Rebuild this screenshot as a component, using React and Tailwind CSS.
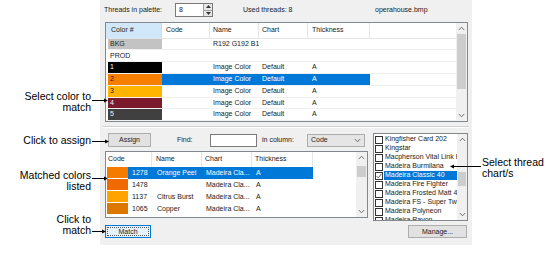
import React from "react";

const UI = "font-['Liberation_Sans',Arial,sans-serif] text-[7px] text-[#1a1a1a]";

function Chevron({ dir = "up" }) {
  return (
    <svg width="7" height="5" viewBox="0 0 7 5" className="block">
      {dir === "up" ? (
        <path d="M0.8 4 L3.5 1.2 L6.2 4" fill="none" stroke="#606060" strokeWidth="0.9" />
      ) : (
        <path d="M0.8 1 L3.5 3.8 L6.2 1" fill="none" stroke="#606060" strokeWidth="0.9" />
      )}
    </svg>
  );
}

function ScrollBar({ thumbTop, thumbH, w = "w-[11px]" }) {
  return (
    <div className={`${w} h-full bg-[#f0f0f0] flex flex-col items-center relative`}>
      <div className="h-[11px] flex items-center justify-center">
        <Chevron dir="up" />
      </div>
      <div className="flex-1 w-full relative">
        <div
          className="absolute left-[1px] right-[1px] bg-[#cdcdcd]"
          style={{ top: thumbTop, height: thumbH }}
        />
      </div>
      <div className="h-[11px] flex items-center justify-center">
        <Chevron dir="down" />
      </div>
    </div>
  );
}

const topRows = [
  { c: "BKG", bg: "#c3c3c3", fg: "#222", name: "R192 G192 B192", chart: "", thick: "", code: "" },
  { c: "PROD", bg: "#ffffff", fg: "#222", name: "", chart: "", thick: "" },
  { c: "1", bg: "#000000", fg: "#fff", name: "Image Color", chart: "Default", thick: "A" },
  { c: "2", bg: "#f77f00", fg: "#222", name: "Image Color", chart: "Default", thick: "A", sel: true },
  { c: "3", bg: "#ffb400", fg: "#222", name: "Image Color", chart: "Default", thick: "A" },
  { c: "4", bg: "#7a1a2c", fg: "#f2f2f2", name: "Image Color", chart: "Default", thick: "A" },
  { c: "5", bg: "#404040", fg: "#f2f2f2", name: "Image Color", chart: "Default", thick: "A" },
];

const matchRows = [
  { sw: "#f57a00", code: "1278", name: "Orange Peel", sel: true },
  { sw: "#f06a00", code: "1478", name: "" },
  { sw: "#ffa300", code: "1137", name: "Citrus Burst" },
  { sw: "#dc7800", code: "1065", name: "Copper" },
];

const charts = [
  "Kingfisher Card 202",
  "Kingstar",
  "Macpherson Vital Link Rayon",
  "Madeira Burmilana",
  "Madeira Classic 40",
  "Madeira Fire Fighter",
  "Madeira Frosted Matt 40",
  "Madeira FS - Super Twist",
  "Madeira Polyneon",
  "Madeira Rayon",
];

function TopTable() {
  return (
    <div className="ml-[5px] mt-[2px] w-[363px] h-[100px] border border-[#828790] bg-white flex overflow-hidden">
      <div className="flex-1 flex flex-col">
        <div className="h-[16px] flex border-b border-[#e5e5e5]">
          <div className="w-[56px] bg-[#d1e8fa] border-r border-[#c4dcef] pl-[5px] flex items-center">Color #</div>
          <div className="w-[48px] border-r border-[#e5e5e5] pl-[4px] flex items-center">Code</div>
          <div className="w-[49px] border-r border-[#e5e5e5] pl-[3px] flex items-center">Name</div>
          <div className="w-[49px] border-r border-[#e5e5e5] pl-[3px] flex items-center">Chart</div>
          <div className="w-[62px] border-r border-[#e5e5e5] pl-[4px] flex items-center">Thickness</div>
          <div className="flex-1" />
        </div>
        {topRows.map((r) => (
          <div key={r.c} className="h-[12px] flex border-b border-[#f0f0f0]">
            <div className="w-[56px] pl-[2px] flex">
              <div
                className="flex-1 pl-[2px] flex items-center"
                style={{ background: r.bg, color: r.fg }}
              >
                {r.c}
              </div>
            </div>
            <div className={`w-[208px] flex ${r.sel ? "bg-[#0078d7] text-white" : ""}`}>
              <div className="w-[48px]" />
              <div className="w-[49px] pl-[3px] flex items-center overflow-hidden whitespace-nowrap">{r.name}</div>
              <div className="w-[49px] pl-[3px] flex items-center whitespace-nowrap">{r.chart}</div>
              <div className="w-[62px] pl-[4px] flex items-center">{r.thick}</div>
            </div>
            <div className="flex-1" />
          </div>
        ))}
      </div>
      <ScrollBar thumbTop={0} thumbH={55} />
    </div>
  );
}

function MatchTable() {
  return (
    <div className="mt-[4px] w-[263px] h-[67px] border border-[#828790] bg-white flex overflow-hidden">
      <div className="flex-1 flex flex-col">
        <div className="h-[15px] flex">
          <div className="w-[46px] border-r border-[#e5e5e5] pl-[2px] flex items-center">Code</div>
          <div className="w-[50px] border-r border-[#e5e5e5] pl-[4px] flex items-center">Name</div>
          <div className="w-[50px] border-r border-[#e5e5e5] pl-[3px] flex items-center">Chart</div>
          <div className="w-[61px] border-r border-[#e5e5e5] pl-[3px] flex items-center">Thickness</div>
          <div className="flex-1" />
        </div>
        {matchRows.map((r) => (
          <div key={r.code} className="h-[12px] flex">
            <div className="w-[22px] pl-[1px] pb-[1px] flex">
              <div className="flex-1" style={{ background: r.sw }} />
            </div>
            <div className={`w-[185px] flex ${r.sel ? "bg-[#0078d7] text-white" : ""}`}>
              <div className="w-[24px] pl-[4px] flex items-center">{r.code}</div>
              <div className="w-[50px] pl-[5px] flex items-center whitespace-nowrap">{r.name}</div>
              <div className="w-[50px] pl-[4px] flex items-center whitespace-nowrap">Madeira Cla...</div>
              <div className="w-[61px] pl-[4px] flex items-center">A</div>
            </div>
            <div className="flex-1" />
          </div>
        ))}
      </div>
      <ScrollBar thumbTop={3} thumbH={11} w="w-[11px]" />
    </div>
  );
}

function ChartList() {
  return (
    <div className="ml-[5px] mt-[5px] w-[95px] h-[88px] border border-[#828790] bg-white flex overflow-hidden">
      <div className="flex-1 flex flex-col overflow-hidden pt-[1px]">
        {charts.map((c) => {
          const sel = c === "Madeira Classic 40";
          return (
            <div key={c} className="h-[9px] flex items-center shrink-0">
              <div className="w-[10px] h-[9px] flex items-center justify-center">
                <div className="w-[8px] h-[8px] border border-[#333] bg-white flex items-center justify-center">
                  {sel && (
                    <svg width="6" height="6" viewBox="0 0 6 6">
                      <path d="M0.6 3.2 L2.3 4.9 L5.4 0.9" fill="none" stroke="#333" strokeWidth="0.8" />
                    </svg>
                  )}
                </div>
              </div>
              <div
                className={`flex-1 h-[9px] pl-[1px] flex items-center whitespace-nowrap overflow-hidden ${
                  sel ? "bg-[#0078d7] text-white" : ""
                }`}
              >
                {c}
              </div>
            </div>
          );
        })}
      </div>
      <ScrollBar thumbTop={27} thumbH={14} w="w-[10px]" />
    </div>
  );
}

function Dialog() {
  return (
    <div className={`w-[372px] h-[245px] bg-[#f0f0f0] flex flex-col ${UI}`}>
      <div className="h-[20px] flex items-center pl-[4px]">
        <div className="w-[71px]">Threads in palette:</div>
        <div className="w-[38px] h-[14px] bg-white border border-[#7a7a7a] flex">
          <div className="flex-1 pl-[3px] flex items-center">8</div>
          <div className="w-[9px] flex flex-col border-l border-[#a0a0a0]">
            <div className="flex-1 bg-[#e8e8e8] border-b border-[#a0a0a0] flex items-center justify-center">
              <svg width="5" height="3" viewBox="0 0 5 3"><path d="M0 3 L2.5 0 L5 3 Z" fill="#333" /></svg>
            </div>
            <div className="flex-1 bg-[#e8e8e8] flex items-center justify-center">
              <svg width="5" height="3" viewBox="0 0 5 3"><path d="M0 0 L2.5 3 L5 0 Z" fill="#333" /></svg>
            </div>
          </div>
        </div>
        <div className="ml-[30px] w-[132px]">Used threads: 8</div>
        <div>operahouse.bmp</div>
      </div>
      <TopTable />
      <div className="mt-[4px] mx-[3px] h-[2px] border-t border-[#d0d0d0] border-b border-b-white" />
      <div className="flex">
        <div className="ml-[5px] w-[263px] flex flex-col">
          <div className="mt-[5px] h-[14px] flex items-center">
            <div className="ml-[3px] w-[43px] h-[14px] bg-[#e1e1e1] border border-[#adadad] flex items-center justify-center">
              Assign
            </div>
            <div className="ml-[26px] w-[33px]">Find:</div>
            <div className="w-[47px] h-[13px] bg-white border border-[#7a7a7a]" />
            <div className="ml-[5px] w-[45px]">in column:</div>
            <div className="w-[58px] h-[13px] mt-[1px] bg-[#e5e5e5] border border-[#acacac] flex items-center pl-[3px] pr-[3px]">
              <span className="flex-1">Code</span>
              <Chevron dir="down" />
            </div>
          </div>
          <MatchTable />
        </div>
        <ChartList />
      </div>
      <div className="mt-[4px] flex items-start">
        <div className="ml-[5px] w-[46px] h-[13px] bg-[#e5f1fb] border border-[#0078d7] flex p-[1px]">
          <div className="flex-1 border border-dotted border-[#555] flex items-center justify-center leading-none">
            Match
          </div>
        </div>
        <div className="ml-[257px] w-[59px] h-[13px] bg-[#e1e1e1] border border-[#adadad] flex items-center justify-center leading-none">
          Manage...
        </div>
      </div>
    </div>
  );
}

export default function App() {
  const note = "font-['Liberation_Sans',Arial,sans-serif] text-[10.5px] leading-[11px] text-black";
  return (
    <div className="w-[557px] h-[262px] bg-white relative flex overflow-hidden">
      <div className="w-[100px] shrink-0" />
      <Dialog />
      <div className={`absolute left-0 top-[91px] w-[91px] text-right ${note}`}>
        Select color to
        <br />
        match
      </div>
      <div className={`absolute left-0 top-[135px] w-[91px] text-right ${note}`}>Click to assign</div>
      <div className={`absolute left-0 top-[170px] w-[91px] text-right ${note}`}>
        Matched colors
        <br />
        listed
      </div>
      <div className={`absolute left-0 top-[214px] w-[91px] text-right ${note}`}>
        Click to
        <br />
        match
      </div>
      <div className={`absolute left-[482px] top-[157px] ${note}`}>
        Select thread
        <br />
        chart/s
      </div>
      <svg className="absolute left-0 top-0 pointer-events-none" width="557" height="262">
        <g stroke="#000" strokeWidth="1">
          <line x1="92" y1="100.5" x2="105" y2="100.5" />
          <line x1="92" y1="141.5" x2="106" y2="141.5" />
          <line x1="92" y1="178.5" x2="105" y2="178.5" />
          <line x1="92" y1="231.5" x2="103" y2="231.5" />
          <line x1="453" y1="166.5" x2="481" y2="166.5" />
        </g>
        <g fill="#000">
          <path d="M108 100.5 L104 98.5 L104 102.5 Z" />
          <path d="M109 141.5 L105 139.5 L105 143.5 Z" />
          <path d="M108 178.5 L104 176.5 L104 180.5 Z" />
          <path d="M106 231.5 L102 229.5 L102 233.5 Z" />
          <path d="M450 166.5 L454 164.5 L454 168.5 Z" />
        </g>
      </svg>
    </div>
  );
}
